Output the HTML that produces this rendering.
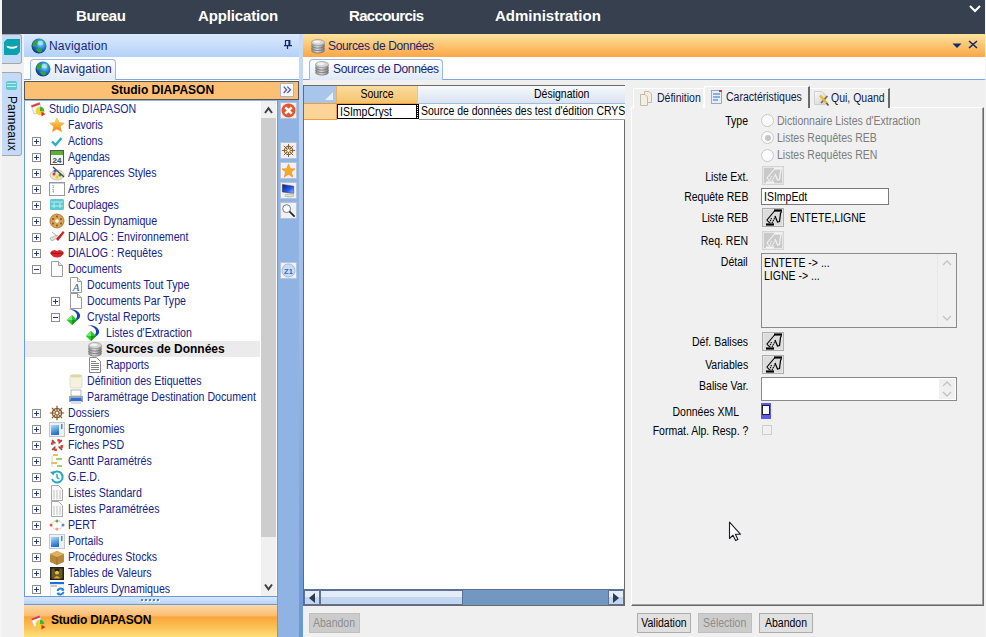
<!DOCTYPE html>
<html><head><meta charset="utf-8">
<style>
*{box-sizing:border-box;margin:0;padding:0}
html,body{width:986px;height:637px;overflow:hidden;background:#f0f0f0;font-family:"Liberation Sans",sans-serif;font-size:11px;color:#000}
.a{position:absolute}
#top{left:2px;top:0;width:983px;height:34px;background:#36404f}
.menu{position:absolute;top:7px;color:#fff;font-weight:bold;font-size:15px;line-height:18px;white-space:nowrap}
/* left vertical tabs */
#vstrip{left:0;top:34px;width:23px;height:603px;background:#f0f0f0}
.vtab{position:absolute;left:2px;width:20px;background:#c3dbf8;border:1px solid #a7a7a7;border-left:none;border-radius:0 3px 3px 0}
/* nav panel */
#navhdr{left:24px;top:34px;width:275px;height:23px;background:linear-gradient(#dce9fc,#b3d1f8)}
.hdrtxt{position:absolute;font-size:12px;color:#15267a;white-space:nowrap}
#navtabs{left:24px;top:57px;width:275px;height:24px;background:#fff}
.tab{position:absolute;background:linear-gradient(#fdfeff,#dfe9f7);border:1px solid #98b8e6;border-bottom:none;border-radius:4px 4px 0 0}
#orhdr{left:24px;top:81px;width:275px;height:19px;background:#fcc075;border:1px solid #555;font-weight:bold;font-size:12px;text-align:center;line-height:17px;padding-left:2px}
#tree{left:24px;top:100px;width:253px;height:496px;background:#fff;border-left:1px solid #6d9ad8;border-top:1px solid #8fb4e8;overflow:hidden}
.row{position:absolute;height:16px;line-height:16px;color:#14238a;white-space:nowrap;font-size:12px;transform:scaleX(0.885);transform-origin:0 0}
.pm{position:absolute;width:9px;height:9px;border:1px solid #8c8c8c;background:#fff}
.pm:before{content:"";position:absolute;left:1px;top:3px;width:5px;height:1px;background:#233a8a}
.pm.p:after{content:"";position:absolute;left:3px;top:1px;width:1px;height:5px;background:#233a8a}
.ic{position:absolute;width:16px;height:16px}
.ic svg{overflow:visible;display:block}
#vscroll{left:261px;top:101px;width:15px;height:495px;background:#f0f0f0;box-shadow:1px 0 0 #fff}
#icol{left:277px;top:100px;width:22px;height:537px;background:#8fb3e3;border-left:1px solid #6a9ad8}
#div{left:299px;top:34px;width:4px;height:603px;background:linear-gradient(#c8dcf8,#6a96d4)}
.tb{position:absolute;left:280px;width:17px;height:17px;background:#e9eef6;border:1px solid #c2cad6}
#split{left:24px;top:596px;width:253px;height:9px;background:linear-gradient(#d8e7fc,#b7d3f8);border-top:1px solid #6d98d6;border-bottom:1px solid #6d98d6}
#botbar{left:24px;top:605px;width:253px;height:32px;background:linear-gradient(#fddaa5 0%,#fbbb72 34%,#f9a43a 37%,#fbc156 70%,#fde07a 100%)}
/* right panel */
#srchdr{left:303px;top:34px;width:682px;height:23px;background:linear-gradient(#fee39d,#fba646)}
#srctabs{left:303px;top:57px;width:682px;height:23px;background:#fff}
#grid{left:303px;top:85px;width:322px;height:521px;background:#fff;border:1px solid #6a6a6a}
.btn{position:absolute;height:20px;border:1px solid #adadad;background:#e1e1e1;text-align:center;line-height:18px;font-size:11px}
.btn.dis{color:#8d8d8d;background:#cccccc;border-color:#bfbfbf}
.lbl{position:absolute;text-align:right;white-space:nowrap;font-size:11px;letter-spacing:-0.2px}
.gray{color:#7c7c7c}
.tw{display:inline-block;font-size:12px;letter-spacing:0;transform:scaleX(0.875);transform-origin:0 50%}
.twr{display:inline-block;font-size:12px;letter-spacing:0;transform:scaleX(0.875);transform-origin:100% 50%}
.radio{position:absolute;width:13px;height:13px;border-radius:50%;border:1px solid #c8c8c8;background:#fbfbfb}
.pbtn{position:absolute;width:22px;height:19px;border:1px solid #adadad;background:#dcdcdc;box-shadow:inset 0 0 0 1px #e6e6e6}
.inp{position:absolute;background:#fff;border:1px solid #7a7a7a}
</style></head><body>
<div class="a" style="left:0;top:0;width:2px;height:637px;background:#f4f4f4"></div>
<div id="top" class="a">
  <div class="menu" style="left:74px;letter-spacing:-0.35px">Bureau</div>
  <div class="menu" style="left:196px;letter-spacing:-0.15px">Application</div>
  <div class="menu" style="left:347px;letter-spacing:-0.65px">Raccourcis</div>
  <div class="menu" style="left:493px">Administration</div>
  <svg class="a" style="left:966px;top:4px" width="14" height="9"><path d="M2 2 L7 7 L12 2" stroke="#fff" stroke-width="2" fill="none"/></svg>
</div>
<div class="a" style="left:985px;top:0;width:1px;height:637px;background:#f4f4f4"></div>

<!-- vertical strip -->
<div class="vtab" style="top:34px;height:30px"><svg class="a" style="left:2px;top:4px" width="16" height="16"><path d="M3 0 H16 V13 L13 16 H0 V3Z" fill="#0aa3ad"/><path d="M2.5 6.5 Q8 9 13.5 6.5 L13 8.5 Q8 11 3 8.5Z" fill="#fff"/></svg></div>
<div class="vtab" style="top:72px;height:84px"><div class="a" style="left:4px;top:8px;width:11px;height:9px;background:#63c7cf;border-radius:2px"><div class="a" style="left:1px;top:2px;width:9px;height:1px;background:#b8eef2"></div><div class="a" style="left:1px;top:5px;width:9px;height:1px;background:#b8eef2"></div></div>
<div class="a" style="left:17px;top:23px;transform-origin:0 0;transform:rotate(90deg);font-size:12px;white-space:nowrap;color:#000;letter-spacing:0.1px">Panneaux</div></div>

<!-- nav header -->
<div id="navhdr" class="a">
  <svg class="a" style="left:7px;top:4px" width="16" height="16"><defs><radialGradient id="gl" cx="0.6" cy="0.35" r="0.7"><stop offset="0" stop-color="#8fe4ff"/><stop offset="0.45" stop-color="#2a88e0"/><stop offset="1" stop-color="#0a2c80"/></radialGradient></defs><circle cx="8" cy="8" r="7.5" fill="url(#gl)"/><path d="M1.5 6 Q3 2.5 6.5 2 Q8 4 6 6.5 Q4.5 8.5 2.5 9 Q1.3 8 1.5 6Z M5 11 Q8 9.5 10.5 11.5 Q12 13 9.5 14.5 Q6.5 14.5 5 11Z M11 2.5 Q14 4 14.5 7 Q12.5 6.5 11.5 5 Z" fill="#2ea82e"/><ellipse cx="9.5" cy="5" rx="3" ry="2.2" fill="#c8f6ff" opacity="0.55"/></svg>
  <div class="hdrtxt" style="left:25px;top:5px;letter-spacing:0.2px">Navigation</div>
  <svg class="a" style="left:260px;top:5px" width="8" height="11"><path d="M1.5 1.5 H6 M1.5 1 V7 M5.2 1 V7 M0 6.6 H8 M3.5 7 V10" stroke="#0d2a6e" stroke-width="1.2" fill="none"/><rect x="4.6" y="1" width="1.8" height="6" fill="#0d2a6e"/></svg>
</div>
<div id="navtabs" class="a">
  <div class="a" style="left:0;top:22px;width:275px;height:1px;background:#7ba7ea"></div>
  <div class="tab" style="left:6px;top:2px;width:86px;height:21px"></div>
</div>
<div class="a" style="left:35px;top:61px"><svg width="16" height="16"><circle cx="8" cy="8" r="7.5" fill="url(#gl)"/><path d="M1.5 6 Q3 2.5 6.5 2 Q8 4 6 6.5 Q4.5 8.5 2.5 9 Q1.3 8 1.5 6Z M5 11 Q8 9.5 10.5 11.5 Q12 13 9.5 14.5 Q6.5 14.5 5 11Z M11 2.5 Q14 4 14.5 7 Q12.5 6.5 11.5 5 Z" fill="#2ea82e"/><ellipse cx="9.5" cy="5" rx="3" ry="2.2" fill="#c8f6ff" opacity="0.55"/></svg></div>
<div class="hdrtxt a" style="left:54px;top:62px;letter-spacing:0.1px">Navigation</div>

<div id="orhdr" class="a">Studio DIAPASON</div>
<div class="a" style="left:280px;top:83px;width:14px;height:14px;background:#f8f9fc;border:1px solid #aeb6c6"><svg class="a" style="left:-1px;top:-1px" width="14" height="14"><path d="M3.7 3.6 L6.6 6.8 L3.7 10 M7.3 3.6 L10.5 6.8 L7.3 10" stroke="#4c5fa8" stroke-width="1.3" fill="none"/></svg></div>

<div id="tree" class="a"><div class="ic" style="left:5px;top:0px"><svg width="16" height="16" viewBox="0 0 16 16"><path d="M1 4.5 L9.5 1.5 L12.5 10 L4 13Z" fill="#f4f4f4" stroke="#c8c8c8" stroke-width="0.8"/><path d="M1.2 4.5 L9.5 1.6 L10.2 3.6 L1.9 6.5Z" fill="#e04040"/><circle cx="10" cy="10" r="4.3" fill="#f2d030"/><path d="M10 10 L10 5.7 A4.3 4.3 0 0 1 14.3 10Z" fill="#40b040"/><path d="M10 10 L14.3 10 A4.3 4.3 0 0 1 12.5 13.5Z" fill="#e0c020"/><path d="M11.5 11 L15.5 13 L11.5 15.5Z" fill="#e02828"/></svg></div>
<div class="row" style="left:24px;top:0px">Studio DIAPASON</div>
<div class="ic" style="left:24px;top:16px"><svg width="16" height="16" viewBox="0 0 16 16"><defs><linearGradient id="stg" x1="0" y1="0" x2="0" y2="1"><stop offset="0" stop-color="#ffe680"/><stop offset="0.5" stop-color="#fbb030"/><stop offset="1" stop-color="#f08010"/></linearGradient></defs><path d="M8 0.8 L10.2 5.6 L15.3 6.1 L11.4 9.5 L12.6 14.8 L8 12 L3.4 14.8 L4.6 9.5 L0.7 6.1 L5.8 5.6Z" fill="url(#stg)" stroke="#e8a040" stroke-width="0.5" stroke-linejoin="round"/></svg></div>
<div class="row" style="left:43px;top:16px">Favoris</div>
<div class="pm p" style="left:7px;top:36px"></div>
<div class="ic" style="left:24px;top:32px"><svg width="16" height="16" viewBox="0 0 16 16"><path d="M3 8.5 L6.5 12 L12.5 5" stroke="#2ab0c0" stroke-width="2.4" fill="none"/></svg></div>
<div class="row" style="left:43px;top:32px">Actions</div>
<div class="pm p" style="left:7px;top:52px"></div>
<div class="ic" style="left:24px;top:48px"><svg width="16" height="16" viewBox="0 0 16 16"><rect x="1.5" y="1.5" width="13" height="14" fill="#f4f4f4" stroke="#555"/><rect x="2" y="2" width="12" height="4" fill="#5cb030"/><text x="8" y="14" font-size="8" font-weight="bold" text-anchor="middle" fill="#444" font-family="Liberation Sans">24</text></svg></div>
<div class="row" style="left:43px;top:48px">Agendas</div>
<div class="pm p" style="left:7px;top:68px"></div>
<div class="ic" style="left:24px;top:64px"><svg width="16" height="16" viewBox="0 0 16 16"><ellipse cx="8" cy="10" rx="7" ry="5" fill="#eee2c8" stroke="#aaa" stroke-width="0.6"/><circle cx="5" cy="9" r="1.5" fill="#d33"/><circle cx="8" cy="12" r="1.5" fill="#fc0"/><circle cx="11" cy="10" r="1.5" fill="#3a3"/><path d="M4 2 L15 12" stroke="#444" stroke-width="1.2"/><circle cx="6" cy="6" r="1.5" fill="#36c"/></svg></div>
<div class="row" style="left:43px;top:64px">Apparences Styles</div>
<div class="pm p" style="left:7px;top:84px"></div>
<div class="ic" style="left:24px;top:80px"><svg width="16" height="16" viewBox="0 0 16 16"><rect x="0.5" y="1.5" width="15" height="13" fill="#fff" stroke="#999"/><path d="M4 4 V12 M4 6 H6 M4 9 H6 M4 11 H6" stroke="#6a9ad8" stroke-width="1" stroke-dasharray="1 1"/><rect x="1" y="2" width="14" height="1" fill="#ccd"/></svg></div>
<div class="row" style="left:43px;top:80px">Arbres</div>
<div class="pm p" style="left:7px;top:100px"></div>
<div class="ic" style="left:24px;top:96px"><svg width="16" height="16" viewBox="0 0 16 16"><rect x="1" y="2" width="14" height="11" rx="1.5" fill="#5cc8d0"/><path d="M2 5 H14 M2 9 H14" stroke="#bdf0f3" stroke-width="1.2"/><path d="M5 6 V11 M11 6 V11" stroke="#bdf0f3" stroke-width="1"/></svg></div>
<div class="row" style="left:43px;top:96px">Couplages</div>
<div class="pm p" style="left:7px;top:116px"></div>
<div class="ic" style="left:24px;top:112px"><svg width="16" height="16" viewBox="0 0 16 16"><circle cx="8" cy="8" r="7" fill="#d8a45a" stroke="#a86d2a" stroke-width="0.8"/><circle cx="8" cy="8" r="1.8" fill="#fff"/><g fill="#8a5020"><circle cx="8" cy="3.5" r="1"/><circle cx="12" cy="6" r="1"/><circle cx="12" cy="10.5" r="1"/><circle cx="8" cy="12.5" r="1"/><circle cx="4" cy="10.5" r="1"/><circle cx="4" cy="6" r="1"/></g></svg></div>
<div class="row" style="left:43px;top:112px">Dessin Dynamique</div>
<div class="pm p" style="left:7px;top:132px"></div>
<div class="ic" style="left:24px;top:128px"><svg width="16" height="16" viewBox="0 0 16 16"><path d="M1 9 L8 6 L10 8 L3 12Z" fill="#ddd" stroke="#999" stroke-width="0.6"/><path d="M7 10 L14 2 L15.5 3.5 L9 12Z" fill="#d32020"/><path d="M3 3 L8 7" stroke="#aaa" stroke-width="1"/></svg></div>
<div class="row" style="left:43px;top:128px">DIALOG : Environnement</div>
<div class="pm p" style="left:7px;top:148px"></div>
<div class="ic" style="left:24px;top:144px"><svg width="16" height="16" viewBox="0 0 16 16"><path d="M1 8 Q4 3 8 6 Q12 3 15 8 Q12 13 8 12.5 Q4 13 1 8Z" fill="#d8262a"/><path d="M2 8 Q8 9 14 8" stroke="#8a0d10" stroke-width="0.8" fill="none"/></svg></div>
<div class="row" style="left:43px;top:144px">DIALOG : Requêtes</div>
<div class="pm" style="left:7px;top:164px"></div>
<div class="ic" style="left:24px;top:160px"><svg width="16" height="16" viewBox="0 0 16 16"><path d="M2.5 0.5 H9.5 L13.5 4.5 V15.5 H2.5Z" fill="#fdfdfd" stroke="#9a9a9a"/><path d="M9.5 0.5 V4.5 H13.5" fill="#e8e8e8" stroke="#9a9a9a"/></svg></div>
<div class="row" style="left:43px;top:160px">Documents</div>
<div class="ic" style="left:43px;top:176px"><svg width="16" height="16" viewBox="0 0 16 16"><path d="M2.5 0.5 H9.5 L13.5 4.5 V15.5 H2.5Z" fill="#fdfdfd" stroke="#9a9a9a"/><path d="M9.5 0.5 V4.5 H13.5" fill="#e8e8e8" stroke="#9a9a9a"/><text x="8" y="14" font-size="11" font-style="italic" font-family="Liberation Serif" text-anchor="middle" fill="#4a5a8a">A</text></svg></div>
<div class="row" style="left:62px;top:176px">Documents Tout Type</div>
<div class="pm p" style="left:26px;top:196px"></div>
<div class="ic" style="left:43px;top:192px"><svg width="16" height="16" viewBox="0 0 16 16"><path d="M2.5 0.5 H9.5 L13.5 4.5 V15.5 H2.5Z" fill="#fdfdfd" stroke="#9a9a9a"/><path d="M9.5 0.5 V4.5 H13.5" fill="#e8e8e8" stroke="#9a9a9a"/></svg></div>
<div class="row" style="left:62px;top:192px">Documents Par Type</div>
<div class="pm" style="left:26px;top:212px"></div>
<div class="ic" style="left:43px;top:208px"><svg width="16" height="16" viewBox="0 0 16 16"><path d="M0.5 0.3 Q9 -0.5 11.8 5 Q13.2 9 8.5 11.5 L7.3 10.5 Q10 8 8.5 4.5 Q6.5 1.2 0.5 0.3Z" fill="#1a3fb0"/><path d="M4 6 L9.2 11 L4 16 L-1.2 11Z" fill="#28c428"/><path d="M4 6 L4 11 L-1.2 11Z" fill="#70ea70"/><path d="M4 11 L9.2 11 L4 16Z" fill="#149a14"/></svg></div>
<div class="row" style="left:62px;top:208px">Crystal Reports</div>
<div class="ic" style="left:62px;top:224px"><svg width="16" height="16" viewBox="0 0 16 16"><path d="M0.5 0.3 Q9 -0.5 11.8 5 Q13.2 9 8.5 11.5 L7.3 10.5 Q10 8 8.5 4.5 Q6.5 1.2 0.5 0.3Z" fill="#1a3fb0"/><path d="M4 6 L9.2 11 L4 16 L-1.2 11Z" fill="#28c428"/><path d="M4 6 L4 11 L-1.2 11Z" fill="#70ea70"/><path d="M4 11 L9.2 11 L4 16Z" fill="#149a14"/></svg></div>
<div class="row" style="left:81px;top:224px">Listes d'Extraction</div>
<div class="a" style="left:0;top:240px;width:235px;height:16px;background:#ebebeb"></div>
<div class="ic" style="left:62px;top:240px"><svg width="16" height="16" viewBox="0 0 16 16"><defs><linearGradient id="dbg" x1="0" y1="0" x2="1" y2="0"><stop offset="0" stop-color="#8a8a8a"/><stop offset="0.45" stop-color="#d8d8d8"/><stop offset="1" stop-color="#7a7a7a"/></linearGradient></defs><path d="M1.5 4.5 V12.5 A6.5 2.6 0 0 0 14.5 12.5 V4.5Z" fill="url(#dbg)"/><path d="M1.5 7.5 A6.5 2.6 0 0 0 14.5 7.5 M1.5 10 A6.5 2.6 0 0 0 14.5 10 M1.5 12.5 A6.5 2.6 0 0 0 14.5 12.5" stroke="#6a6a6a" stroke-width="0.7" fill="none"/><ellipse cx="8" cy="4.5" rx="6.5" ry="3" fill="#d4d4d4" stroke="#8a8a8a" stroke-width="0.6"/><ellipse cx="7" cy="3.8" rx="3.5" ry="1.4" fill="#f2f2f2"/></svg></div>
<div class="row" style="left:81px;top:240px;font-weight:bold;color:#000;letter-spacing:0;font-size:12px;transform:none">Sources de Données</div>
<div class="ic" style="left:62px;top:256px"><svg width="16" height="16" viewBox="0 0 16 16"><path d="M2.5 0.5 H9.5 L13.5 4.5 V15.5 H2.5Z" fill="#fdfdfd" stroke="#8a8a8a"/><path d="M4 4.5 H9 M4 6.5 H12 M4 8.5 H12 M4 10.5 H12 M4 12.5 H12" stroke="#808080" stroke-width="1"/></svg></div>
<div class="row" style="left:81px;top:256px">Rapports</div>
<div class="ic" style="left:43px;top:272px"><svg width="16" height="16" viewBox="0 0 16 16"><rect x="2" y="2" width="12" height="13" rx="2" fill="#f6f2dc" stroke="#ccc" stroke-width="0.6"/><ellipse cx="8" cy="3" rx="6" ry="1.6" fill="#e0d7a8"/></svg></div>
<div class="row" style="left:62px;top:272px">Définition des Etiquettes</div>
<div class="ic" style="left:43px;top:288px"><svg width="16" height="16" viewBox="0 0 16 16"><rect x="3" y="1" width="10" height="6" fill="#fff" stroke="#888" stroke-width="0.6"/><path d="M1 7 H15 V13 H1Z" fill="#9aa6b4"/><path d="M3 9 H13 L14 12 H2Z" fill="#2a6fd6"/><rect x="3" y="12" width="10" height="3" fill="#ddd"/></svg></div>
<div class="row" style="left:62px;top:288px">Paramétrage Destination Document</div>
<div class="pm p" style="left:7px;top:308px"></div>
<div class="ic" style="left:24px;top:304px"><svg width="16" height="16" viewBox="0 0 16 16"><g stroke="#8a5a28" fill="none"><circle cx="8" cy="8" r="4.6" stroke-width="1.5"/><path d="M8 0.8 V15.2 M0.8 8 H15.2 M2.9 2.9 L13.1 13.1 M13.1 2.9 L2.9 13.1" stroke-width="1.2"/></g><circle cx="8" cy="8" r="2" fill="#fff" stroke="#8a5a28" stroke-width="1"/></svg></div>
<div class="row" style="left:43px;top:304px">Dossiers</div>
<div class="pm p" style="left:7px;top:324px"></div>
<div class="ic" style="left:24px;top:320px"><svg width="16" height="16" viewBox="0 0 16 16"><defs><linearGradient id="egr" x1="0" y1="0" x2="0.3" y2="1"><stop offset="0" stop-color="#a8e0fa"/><stop offset="1" stop-color="#2670cc"/></linearGradient></defs><rect x="0.5" y="1.5" width="15" height="14" fill="#eef1f4" stroke="#c4c8cc"/><rect x="2" y="4" width="8" height="10" fill="url(#egr)"/><rect x="12" y="3" width="1.5" height="5" fill="#3d8fe0"/></svg></div>
<div class="row" style="left:43px;top:320px">Ergonomies</div>
<div class="pm p" style="left:7px;top:340px"></div>
<div class="ic" style="left:24px;top:336px"><svg width="16" height="16" viewBox="0 0 16 16"><path d="M3 3 L13 13 M13 3 L3 13" stroke="#555" stroke-width="1.4"/><circle cx="8" cy="8" r="5" fill="none" stroke="#e23a30" stroke-width="2.6" stroke-dasharray="4 3.8"/><circle cx="8" cy="8" r="2.2" fill="#fff"/></svg></div>
<div class="row" style="left:43px;top:336px">Fiches PSD</div>
<div class="pm p" style="left:7px;top:356px"></div>
<div class="ic" style="left:24px;top:352px"><svg width="16" height="16" viewBox="0 0 16 16"><rect x="4" y="1" width="5" height="2" fill="#f2b860"/><rect x="7" y="5" width="6" height="2" fill="#9ad070"/><rect x="2" y="9" width="6" height="2" fill="#f2b860"/><rect x="8" y="12" width="5" height="2" fill="#9ad070"/><path d="M3 3 V14" stroke="#ccc" stroke-width="0.8"/></svg></div>
<div class="row" style="left:43px;top:352px">Gantt Paramétrés</div>
<div class="pm p" style="left:7px;top:372px"></div>
<div class="ic" style="left:24px;top:368px"><svg width="16" height="16" viewBox="0 0 16 16"><path d="M3.5 5 A5.5 5.5 0 1 1 3 10" stroke="#26a8c0" stroke-width="2" fill="none"/><path d="M1 3 L4.5 6.5 L6 2Z" fill="#26a8c0"/><path d="M8 5 V8.5 L10.5 10" stroke="#26a8c0" stroke-width="1.4" fill="none"/></svg></div>
<div class="row" style="left:43px;top:368px">G.E.D.</div>
<div class="pm p" style="left:7px;top:388px"></div>
<div class="ic" style="left:24px;top:384px"><svg width="16" height="16" viewBox="0 0 16 16"><path d="M2.5 0.5 H9.5 L13.5 4.5 V15.5 H2.5Z" fill="#fafafa" stroke="#a8a8a8"/><path d="M5 5 V14 M8 5 V14 M11 5 V14" stroke="#ccc" stroke-width="1.2"/></svg></div>
<div class="row" style="left:43px;top:384px">Listes Standard</div>
<div class="pm p" style="left:7px;top:404px"></div>
<div class="ic" style="left:24px;top:400px"><svg width="16" height="16" viewBox="0 0 16 16"><path d="M2.5 0.5 H9.5 L13.5 4.5 V15.5 H2.5Z" fill="#fafafa" stroke="#a8a8a8"/><path d="M5 5 V14 M8 5 V14 M11 5 V14" stroke="#ccc" stroke-width="1.2"/></svg></div>
<div class="row" style="left:43px;top:400px">Listes Paramétrées</div>
<div class="pm p" style="left:7px;top:420px"></div>
<div class="ic" style="left:24px;top:416px"><svg width="16" height="16" viewBox="0 0 16 16"><path d="M2 8 L5 4 L11 4 L14 8 L11 12 L5 12Z" fill="none" stroke="#f0b040" stroke-width="0.8" stroke-dasharray="1.5 1"/><circle cx="2" cy="8" r="1.5" fill="#e55"/><circle cx="8" cy="4" r="1.5" fill="#5a5"/><circle cx="14" cy="8" r="1.5" fill="#58c"/><circle cx="8" cy="12" r="1.5" fill="#e9a"/></svg></div>
<div class="row" style="left:43px;top:416px">PERT</div>
<div class="pm p" style="left:7px;top:436px"></div>
<div class="ic" style="left:24px;top:432px"><svg width="16" height="16" viewBox="0 0 16 16"><defs><linearGradient id="egr" x1="0" y1="0" x2="0.3" y2="1"><stop offset="0" stop-color="#a8e0fa"/><stop offset="1" stop-color="#2670cc"/></linearGradient></defs><rect x="0.5" y="1.5" width="15" height="14" fill="#eef1f4" stroke="#c4c8cc"/><rect x="2" y="4" width="8" height="10" fill="url(#egr)"/><rect x="12" y="3" width="1.5" height="5" fill="#3d8fe0"/></svg></div>
<div class="row" style="left:43px;top:432px">Portails</div>
<div class="pm p" style="left:7px;top:452px"></div>
<div class="ic" style="left:24px;top:448px"><svg width="16" height="16" viewBox="0 0 16 16"><path d="M1 5 L8 2 L15 5 V13 L8 16 L1 13Z" fill="#b88838"/><path d="M1 5 L8 8 L15 5 L8 2Z" fill="#e0b060"/><path d="M8 8 V16" stroke="#8a6020" stroke-width="0.6"/></svg></div>
<div class="row" style="left:43px;top:448px">Procédures Stocks</div>
<div class="pm p" style="left:7px;top:468px"></div>
<div class="ic" style="left:24px;top:464px"><svg width="16" height="16" viewBox="0 0 16 16"><rect x="1" y="2" width="14" height="13" fill="#1e1e1e"/><rect x="2.5" y="3.5" width="11" height="10" fill="#6a5a20"/><ellipse cx="8" cy="7" rx="2.2" ry="2.6" fill="#e8c040"/><path d="M4.5 13.5 Q8 8.5 11.5 13.5Z" fill="#d8a830"/><path d="M5.5 4 Q8 2.8 10.5 4 L10 7 Q8 4.5 6 7Z" fill="#2a2010"/></svg></div>
<div class="row" style="left:43px;top:464px">Tables de Valeurs</div>
<div class="pm p" style="left:7px;top:484px"></div>
<div class="ic" style="left:24px;top:480px"><svg width="16" height="16" viewBox="0 0 16 16"><rect x="1" y="1" width="14" height="2" fill="#1a6ee0"/><rect x="1.5" y="3.5" width="13" height="12" fill="#fdfdfd" stroke="#d0d0d0" stroke-width="0.6"/><rect x="2" y="4" width="6" height="2" fill="#c8c8c8"/><path d="M8.5 10 A3.3 3.3 0 0 1 14.5 9" stroke="#1f80e0" stroke-width="2" fill="none"/><path d="M14.5 11 A3.3 3.3 0 0 1 8.5 12" stroke="#1f80e0" stroke-width="2" fill="none"/><path d="M13 7 L15.5 9.5 L12.5 10Z M10 14.5 L7.5 12 L10.5 11.5Z" fill="#1f80e0"/></svg></div>
<div class="row" style="left:43px;top:480px">Tableurs Dynamiques</div></div>
<div id="vscroll" class="a">
  <svg class="a" style="left:3px;top:5px" width="9" height="8"><path d="M1 7 L4.5 2.2 L8 7" stroke="#404040" stroke-width="2" fill="none"/></svg>
  <div class="a" style="left:0;top:17px;width:15px;height:419px;background:#cdcdcd"></div>
  <svg class="a" style="left:3px;top:482px" width="9" height="8"><path d="M1 1.5 L4.5 6.3 L8 1.5" stroke="#404040" stroke-width="2" fill="none"/></svg>
</div>
<div id="icol" class="a"><div class="a" style="left:2px;top:2px;width:17px;height:17px;background:#eef1f6;border:1px solid #b9c3d3"><svg class="a" style="left:0;top:0" width="15" height="15"><circle cx="7.5" cy="7.5" r="7" fill="#e8542c"/><path d="M4.3 4.3 L10.7 10.7 M10.7 4.3 L4.3 10.7" stroke="#fff" stroke-width="2.6"/></svg></div>
<div class="a" style="left:2px;top:42px;width:17px;height:17px;background:#eef1f6;border:1px solid #b9c3d3"><svg class="a" style="left:0;top:0" width="15" height="15" viewBox="0 0 16 16"><g stroke="#8a5a28" fill="none"><circle cx="8" cy="8" r="4.4" stroke-width="1.2"/><path d="M8 1 V15 M1 8 H15 M3 3 L13 13 M13 3 L3 13" stroke-width="1"/></g><circle cx="8" cy="8" r="2" fill="#fff" stroke="#8a5a28" stroke-width="0.9"/></svg></div>
<div class="a" style="left:2px;top:62px;width:17px;height:17px;background:#eef1f6;border:1px solid #b9c3d3"><svg class="a" style="left:0;top:0" width="15" height="15" viewBox="0 0 16 16"><path d="M8 1 L10 6 L15 6.3 L11 9.5 L12.5 15 L8 12 L3.5 15 L5 9.5 L1 6.3 L6 6Z" fill="#f9a825" stroke="#e88a10" stroke-width="0.6"/></svg></div>
<div class="a" style="left:2px;top:82px;width:17px;height:17px;background:#eef1f6;border:1px solid #b9c3d3"><svg class="a" style="left:0;top:0" width="15" height="15" viewBox="0 0 16 16"><defs><linearGradient id="mg" x1="0" y1="0" x2="1" y2="1"><stop offset="0" stop-color="#0a1a9a"/><stop offset="0.6" stop-color="#2a5ae8"/><stop offset="1" stop-color="#a8c8ff"/></linearGradient></defs><path d="M1.5 1.5 L13.5 3.5 V11 L1.5 9.5Z" fill="url(#mg)" stroke="#333" stroke-width="0.6"/><ellipse cx="9" cy="13.3" rx="5" ry="1.5" fill="#e0e0e0" stroke="#999" stroke-width="0.6"/></svg></div>
<div class="a" style="left:2px;top:102px;width:17px;height:17px;background:#eef1f6;border:1px solid #b9c3d3"><svg class="a" style="left:0;top:0" width="15" height="15" viewBox="0 0 16 16"><circle cx="6" cy="6" r="4.2" fill="#fafcff" stroke="#666" stroke-width="0.9"/><path d="M9 9 L14.5 14.5" stroke="#222" stroke-width="1.8"/></svg></div>
<div class="a" style="left:2px;top:162px;width:17px;height:17px;background:#eef1f6;border:1px solid #b9c3d3"><svg class="a" style="left:0;top:0" width="15" height="15" viewBox="0 0 16 16"><circle cx="8" cy="8" r="7" fill="#c7ddf5" stroke="#8cb0dc" stroke-width="0.8"/><text x="8" y="11.5" font-size="8" font-weight="bold" text-anchor="middle" fill="#3a6ab0" font-family="Liberation Sans">Z1</text></svg></div></div>
<div id="div" class="a"></div>
<div id="split" class="a"><svg class="a" style="left:117px;top:2px" width="20" height="4"><rect x="1" y="1" width="2" height="2" fill="#fff"/><rect x="0" y="0" width="2" height="2" fill="#5a7fb8"/><rect x="5" y="1" width="2" height="2" fill="#fff"/><rect x="4" y="0" width="2" height="2" fill="#5a7fb8"/><rect x="9" y="1" width="2" height="2" fill="#fff"/><rect x="8" y="0" width="2" height="2" fill="#5a7fb8"/><rect x="13" y="1" width="2" height="2" fill="#fff"/><rect x="12" y="0" width="2" height="2" fill="#5a7fb8"/><rect x="17" y="1" width="2" height="2" fill="#fff"/><rect x="16" y="0" width="2" height="2" fill="#5a7fb8"/></svg></div>
<div id="botbar" class="a"><div class="a" style="left:6px;top:9px"><svg width="16" height="16" viewBox="0 0 16 16"><path d="M1 4.5 L9.5 1.5 L12.5 10 L4 13Z" fill="#f4f4f4" stroke="#c8c8c8" stroke-width="0.8"/><path d="M1.2 4.5 L9.5 1.6 L10.2 3.6 L1.9 6.5Z" fill="#e04040"/><circle cx="10" cy="10" r="4.3" fill="#f2d030"/><path d="M10 10 L10 5.7 A4.3 4.3 0 0 1 14.3 10Z" fill="#40b040"/><path d="M10 10 L14.3 10 A4.3 4.3 0 0 1 12.5 13.5Z" fill="#e0c020"/><path d="M11.5 11 L15.5 13 L11.5 15.5Z" fill="#e02828"/></svg></div><div class="a" style="left:27px;top:8px;font-weight:bold;font-size:12px;letter-spacing:-0.2px">Studio DIAPASON</div></div>

<!-- right -->
<div id="srchdr" class="a">
  <div class="a" style="left:7px;top:4px"><svg width="16" height="16" viewBox="0 0 16 16"><defs><linearGradient id="dbg" x1="0" y1="0" x2="1" y2="0"><stop offset="0" stop-color="#8a8a8a"/><stop offset="0.45" stop-color="#d8d8d8"/><stop offset="1" stop-color="#7a7a7a"/></linearGradient></defs><path d="M1.5 4.5 V12.5 A6.5 2.6 0 0 0 14.5 12.5 V4.5Z" fill="url(#dbg)"/><path d="M1.5 7.5 A6.5 2.6 0 0 0 14.5 7.5 M1.5 10 A6.5 2.6 0 0 0 14.5 10 M1.5 12.5 A6.5 2.6 0 0 0 14.5 12.5" stroke="#6a6a6a" stroke-width="0.7" fill="none"/><ellipse cx="8" cy="4.5" rx="6.5" ry="3" fill="#d4d4d4" stroke="#8a8a8a" stroke-width="0.6"/><ellipse cx="7" cy="3.8" rx="3.5" ry="1.4" fill="#f2f2f2"/></svg></div><div class="hdrtxt" style="left:25px;top:5px;letter-spacing:-0.35px">Sources de Données</div>
  <svg class="a" style="left:649px;top:9px" width="10" height="6"><path d="M0.5 0.5 H9.5 L5 5Z" fill="#0d2a6e"/></svg>
  <svg class="a" style="left:665px;top:6px" width="10" height="9"><path d="M1 1 L9 8 M9 1 L1 8" stroke="#0d2a6e" stroke-width="1.6"/></svg>
</div>
<div id="srctabs" class="a">
  <div class="a" style="left:0;top:22px;width:682px;height:1px;background:#7ba7ea"></div>
  <div class="tab" style="left:6px;top:2px;width:134px;height:21px"></div>
</div>
<div class="a" style="left:314px;top:60px"><svg width="16" height="16" viewBox="0 0 16 16"><defs><linearGradient id="dbg" x1="0" y1="0" x2="1" y2="0"><stop offset="0" stop-color="#8a8a8a"/><stop offset="0.45" stop-color="#d8d8d8"/><stop offset="1" stop-color="#7a7a7a"/></linearGradient></defs><path d="M1.5 4.5 V12.5 A6.5 2.6 0 0 0 14.5 12.5 V4.5Z" fill="url(#dbg)"/><path d="M1.5 7.5 A6.5 2.6 0 0 0 14.5 7.5 M1.5 10 A6.5 2.6 0 0 0 14.5 10 M1.5 12.5 A6.5 2.6 0 0 0 14.5 12.5" stroke="#6a6a6a" stroke-width="0.7" fill="none"/><ellipse cx="8" cy="4.5" rx="6.5" ry="3" fill="#d4d4d4" stroke="#8a8a8a" stroke-width="0.6"/><ellipse cx="7" cy="3.8" rx="3.5" ry="1.4" fill="#f2f2f2"/></svg></div><div class="hdrtxt a" style="left:333px;top:62px;letter-spacing:-0.35px">Sources de Données</div>

<div id="grid" class="a"><div class="a" style="left:0;top:0;width:32px;height:17px;background:#a8c5eb"></div>
<svg class="a" style="left:21px;top:6px" width="9" height="9"><path d="M8 0 V8 H0Z" fill="#e6eef8"/></svg>
<div class="a" style="left:0;top:17px;width:113px;height:1px;background:#f29a35"></div>
<div class="a" style="left:33px;top:0;width:80px;height:17px;background:linear-gradient(#fbdc9f,#f4c46e);text-align:center;line-height:16px;font-size:11px;letter-spacing:-0.1px"><span style="display:inline-block;font-size:12px;letter-spacing:0;transform:scaleX(0.875)">Source</span></div>
<div class="a" style="left:32px;top:0;width:1px;height:17px;background:#e8b060"></div>
<div class="a" style="left:113px;top:0;width:208px;height:18px;background:linear-gradient(#f7f9fc,#d9e3f1);border-left:1px solid #b9cde8;border-bottom:1px solid #a3bcdc;line-height:16px;font-size:11px"><span class="a tw" style="left:116px;top:0">Désignation</span></div>
<div class="a" style="left:0;top:18px;width:33px;height:16px;background:#fdd497;border-right:1px solid #f59a35;border-bottom:1px solid #f59a35"></div>
<div class="a" style="left:33px;top:18px;width:80px;height:15px;background:#fff;border:1px solid #000;line-height:14px;font-size:11px;padding-left:2px;letter-spacing:-0.2px"><span class="tw">ISImpCryst</span></div>
<div class="a" style="left:113px;top:18px;width:1px;height:15px;background:repeating-linear-gradient(#000 0 1px,#fff 1px 2px)"></div>
<div class="a" style="left:114px;top:18px;width:1px;height:15px;background:#000"></div>
<div class="a" style="left:115px;top:18px;width:206px;height:16px;background:#fff;border-bottom:1px solid #a0a0a0;line-height:15px;font-size:11px;padding-left:2px;white-space:nowrap;overflow:hidden;letter-spacing:-0.2px"><span class="tw">Source de données des test d'édition CRYSTAL</span></div>
<div class="a" style="left:0;top:503px;width:320px;height:16px;background:#7297c0;border-top:1px solid #5e7094"></div>
<div class="a" style="left:0;top:504px;width:16px;height:15px;background:linear-gradient(#e3edfa 50%,#c2d6f1 50%);border:1px solid #5e7094"></div>
<svg class="a" style="left:5px;top:507px" width="7" height="10"><path d="M6 0 V10 L0 5Z" fill="#2f3a52"/></svg>
<div class="a" style="left:16px;top:504px;width:143px;height:15px;background:linear-gradient(#e3edfa 50%,#c2d6f1 50%);border:1px solid #5e7094"></div>
<div class="a" style="left:304px;top:504px;width:16px;height:15px;background:linear-gradient(#e3edfa 50%,#c2d6f1 50%);border:1px solid #5e7094"></div>
<svg class="a" style="left:309px;top:507px" width="7" height="10"><path d="M0 0 V10 L6 5Z" fill="#2f3a52"/></svg></div>

<div class="btn dis" style="left:309px;top:613px;width:51px"><span class="tw" style="transform-origin:50% 50%">Abandon</span></div>

<!-- form -->
<div class="a" style="left:631px;top:107px;width:353px;height:499px;border:1px solid #fff;border-right:1px solid #696969;border-bottom:1px solid #696969;box-shadow:inset -1px -1px 0 #a0a0a0;background:#f0f0f0"></div>
<div class="a" style="left:633px;top:88px;width:71px;height:20px;border:1px solid #fff;border-bottom:none;background:#f0f0f0"></div>
<div class="a" style="left:704px;top:86px;width:106px;height:22px;border:1px solid #fff;border-right:2px solid #6a6a6a;border-bottom:none;background:#f0f0f0"></div>
<div class="a" style="left:810px;top:88px;width:80px;height:20px;border-top:1px solid #fff;border-right:2px solid #6a6a6a;background:#f0f0f0"></div>
<div class="a" style="left:657px;top:91px;font-size:11px;color:#101848;letter-spacing:-0.2px"><span class="tw">Définition</span></div>
<div class="a" style="left:726px;top:90px;font-size:11px;color:#101848;letter-spacing:-0.2px"><span class="tw">Caractéristiques</span></div>
<div class="a" style="left:831px;top:91px;font-size:11px;color:#101848;letter-spacing:-0.2px"><span class="tw">Qui, Quand</span></div>
<svg class="a" style="left:639px;top:90px" width="14" height="16"><path d="M5.5 1.5 H10 L12.5 4 V12.5 H5.5Z" fill="#f5efe3" stroke="#b8ad98" stroke-width="0.8"/><path d="M1.5 4.5 H6 L8.5 7 V15.5 H1.5Z" fill="#f5efe3" stroke="#b8ad98" stroke-width="0.8"/></svg>
<svg class="a" style="left:711px;top:90px" width="11" height="14"><rect x="0.5" y="0.5" width="10" height="13" fill="#e6edf5" stroke="#8a9ab0" stroke-width="0.8"/><path d="M2 4 H9 M2 7 H9 M2 10 H7" stroke="#2a6fd0" stroke-width="1"/><rect x="8" y="0" width="3" height="2" fill="#d33"/></svg>
<svg class="a" style="left:813px;top:90px" width="17" height="17"><defs><linearGradient id="qg" x1="0" y1="0" x2="1" y2="1"><stop offset="0" stop-color="#fafafa"/><stop offset="1" stop-color="#cfcfcf"/></linearGradient></defs><path d="M1.5 1.5 H9 L12.5 5 V14.5 H1.5Z" fill="url(#qg)" stroke="#c8c8c8" stroke-width="0.8"/><path d="M14.5 6 L8 13" stroke="#666" stroke-width="1.6"/><path d="M7 5.5 L14 13.5" stroke="#f0b820" stroke-width="2.2"/><path d="M13.5 13 L15.5 15.5" stroke="#555" stroke-width="1.6"/></svg>
<div class="lbl " style="right:238px;top:114px"><span class="twr">Type</span></div>
<div class="radio" style="left:761px;top:114px"></div>
<div class="radio" style="left:761px;top:131px"><div class="a" style="left:2.5px;top:2.5px;width:6px;height:6px;border-radius:50%;background:#c4c4c4"></div></div>
<div class="radio" style="left:761px;top:149px"></div>
<div class="a gray" style="left:777px;top:114px;letter-spacing:-0.2px"><span class="tw">Dictionnaire Listes d'Extraction</span></div>
<div class="a gray" style="left:777px;top:131px;letter-spacing:-0.2px"><span class="tw">Listes Requêtes REB</span></div>
<div class="a gray" style="left:777px;top:148px;letter-spacing:-0.2px"><span class="tw">Listes Requêtes REN</span></div>
<div class="lbl " style="right:238px;top:170px"><span class="twr">Liste Ext.</span></div>
<div class="pbtn" style="left:762px;top:166px;background:#c9c9c9;border-color:#d4d4d4"><svg class="a" style="left:0;top:0" width="21" height="18" viewBox="0 0 21 18"><path d="M11 1.5 H19" stroke="#f2f2f2" stroke-width="2.2"/><path d="M3 15.5 H11" stroke="#f2f2f2" stroke-width="2.2"/><path d="M11.5 2 L4 11 L6 13.5" fill="none" stroke="#f2f2f2" stroke-width="1.1"/><path d="M8.5 9 L6.5 14 M12.5 7.5 L9 14" fill="none" stroke="#f2f2f2" stroke-width="1.1" stroke-dasharray="1.4 0.6"/><path d="M12 7 L14.5 13 L16.5 12.5 L17.5 4.5 L18.5 2.5" fill="none" stroke="#f2f2f2" stroke-width="1.2"/></svg></div>
<div class="lbl " style="right:238px;top:190px"><span class="twr">Requête REB</span></div>
<div class="inp" style="left:761px;top:188px;width:128px;height:17px;line-height:17px;padding-left:2px;letter-spacing:-0.2px"><span class="tw">ISImpEdt</span></div>
<div class="lbl " style="right:238px;top:211px"><span class="twr">Liste REB</span></div>
<div class="pbtn" style="left:762px;top:208px;"><svg class="a" style="left:0;top:0" width="21" height="18" viewBox="0 0 21 18"><path d="M11 1.5 H19" stroke="#000" stroke-width="2.2"/><path d="M3 15.5 H11" stroke="#000" stroke-width="2.2"/><path d="M11.5 2 L4 11 L6 13.5" fill="none" stroke="#000" stroke-width="1.1"/><path d="M8.5 9 L6.5 14 M12.5 7.5 L9 14" fill="none" stroke="#000" stroke-width="1.1" stroke-dasharray="1.4 0.6"/><path d="M12 7 L14.5 13 L16.5 12.5 L17.5 4.5 L18.5 2.5" fill="none" stroke="#000" stroke-width="1.2"/></svg></div>
<div class="a" style="left:790px;top:211px;letter-spacing:-0.1px"><span class="tw">ENTETE,LIGNE</span></div>
<div class="lbl " style="right:238px;top:234px"><span class="twr">Req. REN</span></div>
<div class="pbtn" style="left:762px;top:231px;background:#c9c9c9;border-color:#d4d4d4"><svg class="a" style="left:0;top:0" width="21" height="18" viewBox="0 0 21 18"><path d="M11 1.5 H19" stroke="#f2f2f2" stroke-width="2.2"/><path d="M3 15.5 H11" stroke="#f2f2f2" stroke-width="2.2"/><path d="M11.5 2 L4 11 L6 13.5" fill="none" stroke="#f2f2f2" stroke-width="1.1"/><path d="M8.5 9 L6.5 14 M12.5 7.5 L9 14" fill="none" stroke="#f2f2f2" stroke-width="1.1" stroke-dasharray="1.4 0.6"/><path d="M12 7 L14.5 13 L16.5 12.5 L17.5 4.5 L18.5 2.5" fill="none" stroke="#f2f2f2" stroke-width="1.2"/></svg></div>
<div class="lbl " style="right:238px;top:255px"><span class="twr">Détail</span></div>
<div class="inp" style="left:761px;top:253px;width:196px;height:75px;background:#f0f0f0;border-color:#8a8a8a;padding:3px 0 0 2px;line-height:13px;letter-spacing:-0.1px"><span class="tw">ENTETE -&gt; ...</span><br><span class="tw">LIGNE -&gt; ...</span></div>
<div class="a" style="left:937px;top:254px;width:19px;height:73px;background:#f0f0f0;border-left:1px solid #e8e8e8"></div>
<svg class="a" style="left:942px;top:259px" width="10" height="7"><path d="M1 6 L5 2 L9 6" stroke="#c4c4c4" stroke-width="1.4" fill="none"/></svg>
<svg class="a" style="left:942px;top:315px" width="10" height="7"><path d="M1 1 L5 5 L9 1" stroke="#c4c4c4" stroke-width="1.4" fill="none"/></svg>
<div class="lbl " style="right:238px;top:335px"><span class="twr">Déf. Balises</span></div>
<div class="pbtn" style="left:762px;top:332px;"><svg class="a" style="left:0;top:0" width="21" height="18" viewBox="0 0 21 18"><path d="M11 1.5 H19" stroke="#000" stroke-width="2.2"/><path d="M3 15.5 H11" stroke="#000" stroke-width="2.2"/><path d="M11.5 2 L4 11 L6 13.5" fill="none" stroke="#000" stroke-width="1.1"/><path d="M8.5 9 L6.5 14 M12.5 7.5 L9 14" fill="none" stroke="#000" stroke-width="1.1" stroke-dasharray="1.4 0.6"/><path d="M12 7 L14.5 13 L16.5 12.5 L17.5 4.5 L18.5 2.5" fill="none" stroke="#000" stroke-width="1.2"/></svg></div>
<div class="lbl " style="right:238px;top:358px"><span class="twr">Variables</span></div>
<div class="pbtn" style="left:762px;top:355px;"><svg class="a" style="left:0;top:0" width="21" height="18" viewBox="0 0 21 18"><path d="M11 1.5 H19" stroke="#000" stroke-width="2.2"/><path d="M3 15.5 H11" stroke="#000" stroke-width="2.2"/><path d="M11.5 2 L4 11 L6 13.5" fill="none" stroke="#000" stroke-width="1.1"/><path d="M8.5 9 L6.5 14 M12.5 7.5 L9 14" fill="none" stroke="#000" stroke-width="1.1" stroke-dasharray="1.4 0.6"/><path d="M12 7 L14.5 13 L16.5 12.5 L17.5 4.5 L18.5 2.5" fill="none" stroke="#000" stroke-width="1.2"/></svg></div>
<div class="lbl " style="right:238px;top:379px"><span class="twr">Balise Var.</span></div>
<div class="inp" style="left:761px;top:377px;width:196px;height:24px;border-color:#8a8a8a"></div>
<div class="a" style="left:939px;top:379px;width:16px;height:20px;background:#f0f0f0"></div>
<svg class="a" style="left:942px;top:380px" width="10" height="7"><path d="M1 6 L5 2 L9 6" stroke="#c4c4c4" stroke-width="1.4" fill="none"/></svg>
<svg class="a" style="left:942px;top:391px" width="10" height="7"><path d="M1 1 L5 5 L9 1" stroke="#c4c4c4" stroke-width="1.4" fill="none"/></svg>
<div class="lbl " style="right:247px;top:405px"><span class="twr">Données XML</span></div>
<div class="a" style="left:761px;top:403px;width:10px;height:16px;background:#5a5af0"></div>
<div class="a" style="left:762px;top:405px;width:8px;height:10px;background:#fff;border:1px solid #222"></div>
<div class="lbl " style="right:238px;top:424px"><span class="twr">Format. Alp. Resp. ?</span></div>
<div class="a" style="left:762px;top:425px;width:10px;height:10px;background:#f0f0f0;border:1px solid #cdcdcd"></div>
<svg class="a" style="left:728px;top:521px" width="16" height="22"><path d="M1.5 1.2 V17.5 L5 14.2 L7.6 19.6 L9.9 18.6 L7.4 13.3 H12.6Z" fill="#fff" stroke="#1a1a22" stroke-width="1.1" stroke-linejoin="round"/></svg>

<div class="btn" style="left:637px;top:613px;width:54px"><span class="tw" style="transform-origin:50% 50%">Validation</span></div>
<div class="btn dis" style="left:698px;top:613px;width:54px"><span class="tw" style="transform-origin:50% 50%">Sélection</span></div>
<div class="btn" style="left:759px;top:613px;width:54px"><span class="tw" style="transform-origin:50% 50%">Abandon</span></div>

</body></html>
